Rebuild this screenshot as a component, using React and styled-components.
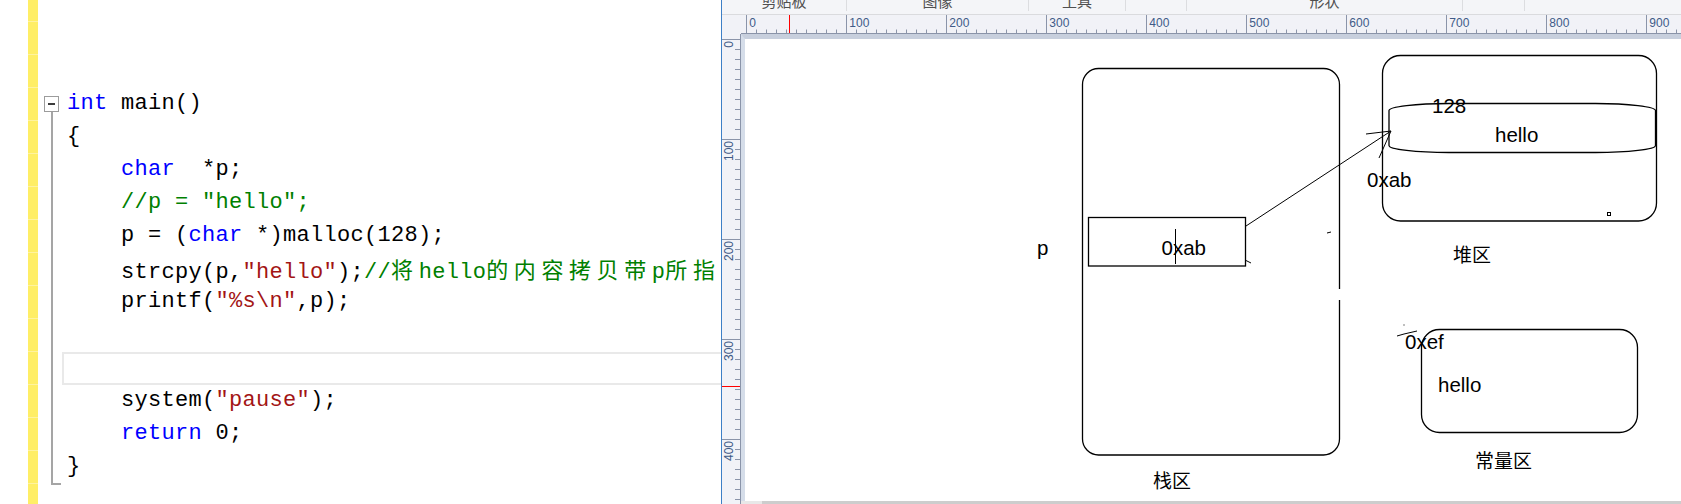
import React from 'react';
import styled, { createGlobalStyle, css } from 'styled-components';

const GlobalStyle = createGlobalStyle`
  html, body {
    margin: 0;
    padding: 0;
    background: #fff;
    overflow: hidden;
  }
  #root {
    width: 1681px;
    height: 504px;
  }
`;

const Screen = styled.div`
  display: flex;
  width: 1681px;
  height: 504px;
  overflow: hidden;
  background: #fff;
`;

/* ---------- code editor (left) ---------- */

const Editor = styled.section`
  display: flex;
  flex: none;
  width: 721px;
  height: 100%;
  overflow: hidden;
  background: #fff;
`;

const Gutter = styled.div`
  flex: none;
  width: 28px;
`;

const ChangeBar = styled.div`
  flex: none;
  width: 10px;
  background: repeating-linear-gradient(to bottom, #ffee66 0 32px, #fff3a0 32px 33px);
  background-position: 0 -11px;
`;

const FoldColumn = styled.div`
  flex: none;
  width: 24px;
  padding-top: 96px;
  display: flex;
  flex-direction: column;
`;

const FoldBox = styled.div`
  width: 15px;
  height: 16px;
  margin-left: 6px;
  box-sizing: border-box;
  border: 1px solid #9c9c9c;
  background: #fff;
  display: flex;
  align-items: center;
  justify-content: center;

  &::before {
    content: '';
    width: 7px;
    height: 2px;
    background: #3c3c3c;
  }
`;

const FoldLine = styled.div`
  width: 10px;
  height: 373px;
  margin-left: 13px;
  box-sizing: border-box;
  border-left: 2px solid #a5a5a5;
  border-bottom: 2px solid #a5a5a5;
`;

const Code = styled.div`
  flex: 1;
  min-width: 0;
  padding-top: 87px;
  font-family: "Liberation Mono", "DejaVu Sans Mono", monospace;
  font-size: 22px;
  letter-spacing: 0.3px;
  color: #000;
`;

const Line = styled.div`
  height: 33px;
  line-height: 33px;
  white-space: pre;
  padding-left: 5px;
  box-sizing: border-box;

  ${p => p.$current && css`
    border: 2px solid #e9e9e9;
    border-right: none;
    line-height: 29px;
    padding-left: 3px;
    margin-top: 1px;
    margin-bottom: -1px;
  `}
`;

const Kw = styled.span`
  color: #0000ff;
`;

const Str = styled.span`
  color: #a31515;
`;

const Cm = styled.span`
  color: #008000;
`;

const Cjk = styled.span`
  font-family: "Noto Sans CJK SC", sans-serif;
  letter-spacing: 5.6px;
`;

/* ---------- paint window (right) ---------- */

const Paint = styled.section`
  flex: 1;
  display: flex;
  flex-direction: column;
  border-left: 1px solid #3d7fc6;
  background: #f1f2f7;
  min-width: 0;
`;

const RibbonLabels = styled.div`
  flex: none;
  height: 14px;
  display: flex;
  overflow: hidden;
  background: #f4f5f8;
  border-bottom: 1px solid #dadbde;
`;

const RibbonGroup = styled.div`
  display: flex;
  flex: ${p => (p.$w ? 'none' : '1')};
  width: ${p => (p.$w ? `${p.$w}px` : 'auto')};
`;

const GroupLabel = styled.span`
  flex: 1;
  text-align: center;
  margin-top: -7.5px;
  line-height: 15px;
  font-family: "Noto Sans CJK SC", sans-serif;
  font-size: 15px;
  color: #505050;
`;

const GroupSep = styled.span`
  flex: none;
  width: 1px;
  height: 11px;
  background: #dcdde0;
`;

const Workspace = styled.div`
  flex: 1;
  min-height: 0;
  display: grid;
  grid-template-columns: 19px 1fr;
  grid-template-rows: 19px 1fr;
  background: #f1f2f7;
`;

const RulerCorner = styled.div`
  background: #f1f2f7;
`;

const RulerSvg = styled.svg`
  display: block;
  font-family: "Liberation Sans", Arial, sans-serif;
`;

const CanvasArea = styled.div`
  display: flex;
  flex-direction: column;
  min-height: 0;
`;

const CanvasFrame = styled.div`
  flex: 1;
  min-height: 0;
  overflow: hidden;
  background: #fff;
  border-top: 5px solid #c7cfdd;
  border-left: 4px solid #d5dde9;
`;

const HScroll = styled.div`
  flex: none;
  height: 3px;
  display: flex;
  background: #cdcdcd;

  &::before {
    content: '';
    width: 21px;
    background: #e8e8e8;
  }
`;

const Drawing = styled.svg`
  display: block;
  font-family: "Liberation Sans", Arial, sans-serif;
`;

const groups = [
  { w: 125, label: '剪贴板' },
  { w: 182, label: '图像' },
  { w: 97, label: '工具' },
  { w: 61, label: '' },
  { w: 276, label: '形状' },
  { w: 62, label: '' },
  { w: 0, label: '' },
];

const TICK = '#8a94a9';
const LABEL = '#405a87';

function HorizontalRuler() {
  const ticks = [];
  for (let k = 0; 746.5 + k * 10 <= 1681; k++) {
    const x = 746.5 + k * 10;
    const major = k % 10 === 0;
    ticks.push(
      <line key={k} x1={x} x2={x} y1={major ? 15 : 29.5} y2={34} stroke={TICK} strokeWidth="1" />
    );
    if (major) {
      ticks.push(
        <text key={`t${k}`} x={x + 2.8} y={26.7} fontSize="12" fill={LABEL}>{k * 10}</text>
      );
    }
  }
  return (
    <RulerSvg width="940" height="19" viewBox="741 15 940 19">
      {ticks}
      <line x1="741" x2="1681" y1="33.5" y2="33.5" stroke={TICK} />
      <line x1="789.5" x2="789.5" y1="15" y2="33" stroke="#ff0000" />
    </RulerSvg>
  );
}

function VerticalRuler() {
  const ticks = [];
  for (let k = 0; 39.5 + k * 10 <= 504; k++) {
    const y = 39.5 + k * 10;
    const major = k % 10 === 0;
    ticks.push(
      <line key={k} y1={y} y2={y} x1={major ? 722 : 735} x2={741} stroke={TICK} strokeWidth="1" />
    );
    if (major) {
      ticks.push(
        <text
          key={`t${k}`}
          transform={`translate(733 ${y + 1.5}) rotate(-90)`}
          textAnchor="end"
          fontSize="12"
          fill={LABEL}
        >
          {k * 10}
        </text>
      );
    }
  }
  return (
    <RulerSvg width="19" height="470" viewBox="722 34 19 470">
      {ticks}
      <line x1="740.5" x2="740.5" y1="34" y2="504" stroke={TICK} />
      <line x1="722" x2="740" y1="386.5" y2="386.5" stroke="#ff0000" />
    </RulerSvg>
  );
}

function MemoryDiagram() {
  const stroke = { fill: 'none', stroke: '#000', strokeWidth: 1.3 };
  const label = { fontSize: 20.5, fill: '#000' };
  const cjk = { fontSize: 19, fill: '#000', fontFamily: '"Noto Sans CJK SC", sans-serif' };
  return (
    <Drawing width="936" height="462" viewBox="745 39 936 462">
      {/* stack */}
      <path
        {...stroke}
        d="M1339.5 289 V84.5 A16 16 0 0 0 1323.5 68.5 H1098.5 A16 16 0 0 0 1082.5 84.5 V439 A16 16 0 0 0 1098.5 455 H1323.5 A16 16 0 0 0 1339.5 439 V300"
      />
      <rect {...stroke} x="1088.5" y="217.5" width="157" height="48.5" />
      <line x1="1175.5" x2="1175.5" y1="229" y2="264" stroke="#000" strokeWidth="1" />
      <text {...label} x="1161.5" y="255">0xab</text>
      <text {...label} x="1037" y="255">p</text>
      <path {...stroke} strokeWidth="1" d="M1245 260 L1251 263" />
      <path {...stroke} strokeWidth="1" d="M1327 233 L1331 232" />
      <text {...cjk} x="1153" y="488">栈区</text>

      {/* pointer arrow */}
      <path {...stroke} strokeWidth="1" d="M1246 226 L1391 131 M1366 134 L1391 131 M1379 158 L1391 131" />

      {/* heap */}
      <rect {...stroke} x="1382.5" y="55.5" width="274" height="165.5" rx="18" />
      <rect {...stroke} x="1389" y="103.5" width="266.5" height="49" rx="60" ry="7" />
      <text {...label} x="1432" y="112.5">128</text>
      <text {...label} x="1495" y="141.5">hello</text>
      <text {...label} x="1367" y="186.5">0xab</text>
      <rect {...stroke} strokeWidth="1" x="1607.5" y="212.5" width="3" height="3" />
      <text {...cjk} x="1453" y="262">堆区</text>

      {/* constants */}
      <rect {...stroke} x="1421.5" y="329.5" width="216" height="103" rx="18" />
      <path {...stroke} strokeWidth="1" d="M1397 336 L1404 334 L1417 331" />
      <rect x="1403.5" y="324.5" width="1" height="1" fill="#000" />
      <text {...label} x="1405" y="349">0xef</text>
      <text {...label} x="1438" y="391.5">hello</text>
      <text {...cjk} x="1475" y="468">常量区</text>
    </Drawing>
  );
}

export default function App() {
  return (
    <>
      <GlobalStyle />
      <Screen>
        <Editor>
          <Gutter />
          <ChangeBar />
          <FoldColumn>
            <FoldBox />
            <FoldLine />
          </FoldColumn>
          <Code>
            <Line><Kw>int</Kw> main()</Line>
            <Line>{'{'}</Line>
            <Line>{'    '}<Kw>char</Kw>{'  *p;'}</Line>
            <Line>{'    '}<Cm>//p = "hello";</Cm></Line>
            <Line>{'    p = ('}<Kw>char</Kw>{' *)malloc(128);'}</Line>
            <Line>
              {'    strcpy(p,'}<Str>"hello"</Str>{');'}
              <Cm>//<Cjk>将</Cjk>hello<Cjk>的内容拷贝带</Cjk>p<Cjk>所指向</Cjk></Cm>
            </Line>
            <Line>{'    printf('}<Str>"%s\n"</Str>{',p);'}</Line>
            <Line />
            <Line $current />
            <Line>{'    system('}<Str>"pause"</Str>{');'}</Line>
            <Line>{'    '}<Kw>return</Kw>{' 0;'}</Line>
            <Line>{'}'}</Line>
          </Code>
        </Editor>

        <Paint>
          <RibbonLabels>
            {groups.map((g, i) => (
              <RibbonGroup key={i} $w={g.w}>
                <GroupLabel>{g.label}</GroupLabel>
                {g.w > 0 && <GroupSep />}
              </RibbonGroup>
            ))}
          </RibbonLabels>
          <Workspace>
            <RulerCorner />
            <HorizontalRuler />
            <VerticalRuler />
            <CanvasArea>
              <CanvasFrame>
                <MemoryDiagram />
              </CanvasFrame>
              <HScroll />
            </CanvasArea>
          </Workspace>
        </Paint>
      </Screen>
    </>
  );
}
